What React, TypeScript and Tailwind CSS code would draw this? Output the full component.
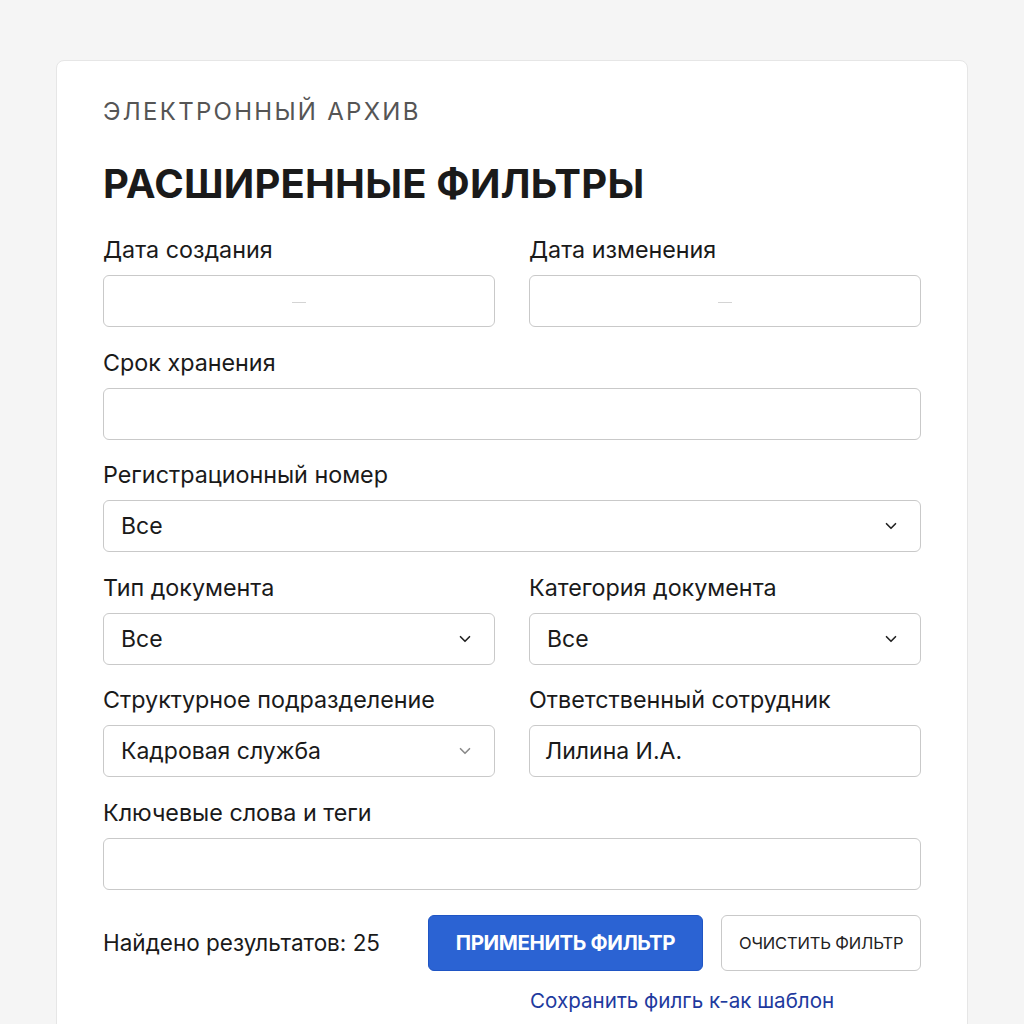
import { ChevronDown } from "lucide-react";

const font = { fontFamily: "Inter, 'Noto Sans', sans-serif" };

const Label = ({ children }: { children: React.ReactNode }) => (
  <div className="text-[23.3px] leading-[28px] text-[#1a1a1a]">{children}</div>
);

const Box = ({ children, className = "" }: { children?: React.ReactNode; className?: string }) => (
  <div
    className={`mt-[11px] h-[52px] rounded-md border border-[#c9c9c9] bg-white flex items-center ${className}`}
  >
    {children}
  </div>
);

const DateBox = () => (
  <Box className="justify-center">
    <span className="block w-[14px] h-px bg-[#d4d4d4] mt-[2px]" />
  </Box>
);

const SelectBox = ({ value, light }: { value: string; light?: boolean }) => (
  <Box className="justify-between pl-[17px] pr-[20px]">
    <span className="text-[23px] text-[#1a1a1a]">{value}</span>
    <ChevronDown
      className={`w-[18px] h-[18px] ${light ? "text-[#8a8a8a]" : "text-[#222]"}`}
      strokeWidth={2.2}
    />
  </Box>
);

const App = () => {
  return (
    <div className="min-h-screen bg-[#f5f5f5] pt-[60px] px-[56px] overflow-hidden" style={font}>
      <div className="bg-white border border-[#e6e6e6] rounded-lg px-[46px] pt-[36px] pb-[40px] min-h-[980px]">
        <div className="text-[24px] leading-[30px] tracking-[0.095em] text-[#555]">ЭЛЕКТРОННЫЙ АРХИВ</div>
        <h1 className="mt-[33px] text-[40px] leading-[48px] font-bold text-[#1a1a1a] tracking-[0.005em]">
          РАСШИРЕННЫЕ ФИЛЬТРЫ
        </h1>

        <div className="mt-[28px] grid grid-cols-2 gap-x-[34px] gap-y-[21.6px]">
          <div>
            <Label>Дата создания</Label>
            <DateBox />
          </div>
          <div>
            <Label>Дата изменения</Label>
            <DateBox />
          </div>

          <div className="col-span-2">
            <Label>Срок хранения</Label>
            <Box />
          </div>

          <div className="col-span-2">
            <Label>Регистрационный номер</Label>
            <SelectBox value="Все" />
          </div>

          <div>
            <Label>Тип документа</Label>
            <SelectBox value="Все" />
          </div>
          <div>
            <Label>Категория документа</Label>
            <SelectBox value="Все" />
          </div>

          <div>
            <Label>Структурное подразделение</Label>
            <SelectBox value="Кадровая служба" light />
          </div>
          <div>
            <Label>Ответственный сотрудник</Label>
            <Box className="pl-[15px]">
              <span className="text-[23px] text-[#1a1a1a]">Лилина И.А.</span>
            </Box>
          </div>

          <div className="col-span-2">
            <Label>Ключевые слова и теги</Label>
            <Box />
          </div>
        </div>

        <div className="mt-[25px] flex items-center">
          <div className="text-[22.5px] text-[#1a1a1a] w-[325px]">Найдено результатов: 25</div>
          <button className="h-[56px] w-[276px] rounded-md bg-[#2b63d3] border border-[#1f55c4] text-white text-[20.5px] font-bold tracking-[-0.02em]">
            ПРИМЕНИТЬ ФИЛЬТР
          </button>
          <button className="ml-[18px] h-[56px] w-[200px] rounded-md bg-white border border-[#c9c9c9] text-[#222] text-[16.5px] tracking-[-0.01em]">
            ОЧИСТИТЬ ФИЛЬТР
          </button>
        </div>
        <div className="mt-[15px] pl-[427px] text-[20.6px] text-[#1e3a9e]">Сохранить филгь к-ак шаблон</div>
      </div>
    </div>
  );
};

export default App;
